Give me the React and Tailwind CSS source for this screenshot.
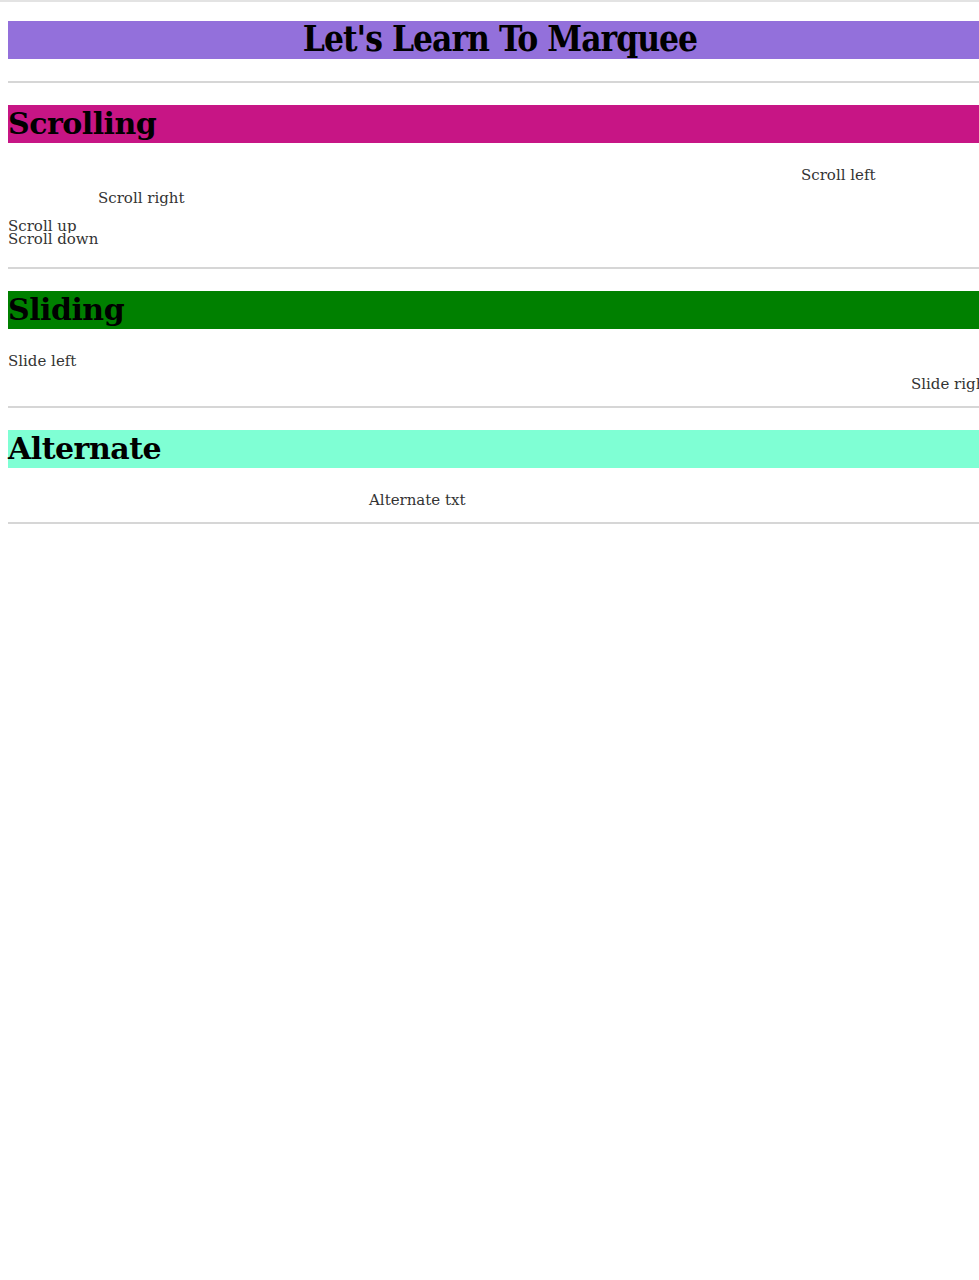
export default function App() {
  const serif = { fontFamily: '"DejaVu Serif", "Liberation Serif", serif' };
  return (
    <div className="w-[979px] min-h-[1280px] overflow-hidden bg-white" style={serif}>
      <div className="h-[2px] bg-[#e3e3e3]" />
      <div className="w-[1000px] px-2">
        {/* Titulo */}
        <h1 className="mt-[19px] h-[38px] bg-[#9370db] text-center text-[35px] leading-[36px] font-bold text-black tracking-[-1px] [font-stretch:condensed]" style={{ fontFamily: '"DejaVu Serif Condensed", "DejaVu Serif", serif' }}>
          Let's Learn To Marquee
        </h1>
        <hr className="mt-[22px] border-t-2 border-[#d6d6d6]" />

        {/* Scrolling */}
        <h2 className="mt-[22px] h-[38px] bg-[#c71585] text-[30px] leading-[38px] font-bold text-black tracking-[-0.5px]">Scrolling</h2>
        <div className="text-[15px] leading-[23px] text-[#333]">
          <p className="mt-[21px] ml-[793px]">Scroll left</p>
          <p className="ml-[90px]">Scroll right</p>
          <div className="mt-[5px] h-[18px] overflow-hidden">
            <p>Scroll up</p>
          </div>
          <div className="h-[17px] overflow-hidden">
            <p className="-mt-[5px]">Scroll down</p>
          </div>
        </div>
        <hr className="mt-[17px] border-t-2 border-[#d6d6d6]" />

        {/* Sliding */}
        <h2 className="mt-[22px] h-[38px] bg-[#008000] text-[30px] leading-[38px] font-bold text-black tracking-[-0.5px]">Sliding</h2>
        <div className="text-[15px] leading-[23px] text-[#333]">
          <p className="mt-[21px]">Slide left</p>
          <p className="ml-[903px] whitespace-nowrap">Slide right</p>
        </div>
        <hr className="mt-[10px] border-t-2 border-[#d6d6d6]" />

        {/* Alternate */}
        <h2 className="mt-[22px] h-[38px] bg-[#7fffd4] text-[30px] leading-[38px] font-bold text-black tracking-[-0.5px]">Alternate</h2>
        <div className="text-[15px] leading-[23px] text-[#333]">
          <p className="mt-[21px] ml-[361px]">Alternate txt</p>
        </div>
        <hr className="mt-[10px] border-t-2 border-[#d6d6d6]" />
      </div>
    </div>
  );
}
